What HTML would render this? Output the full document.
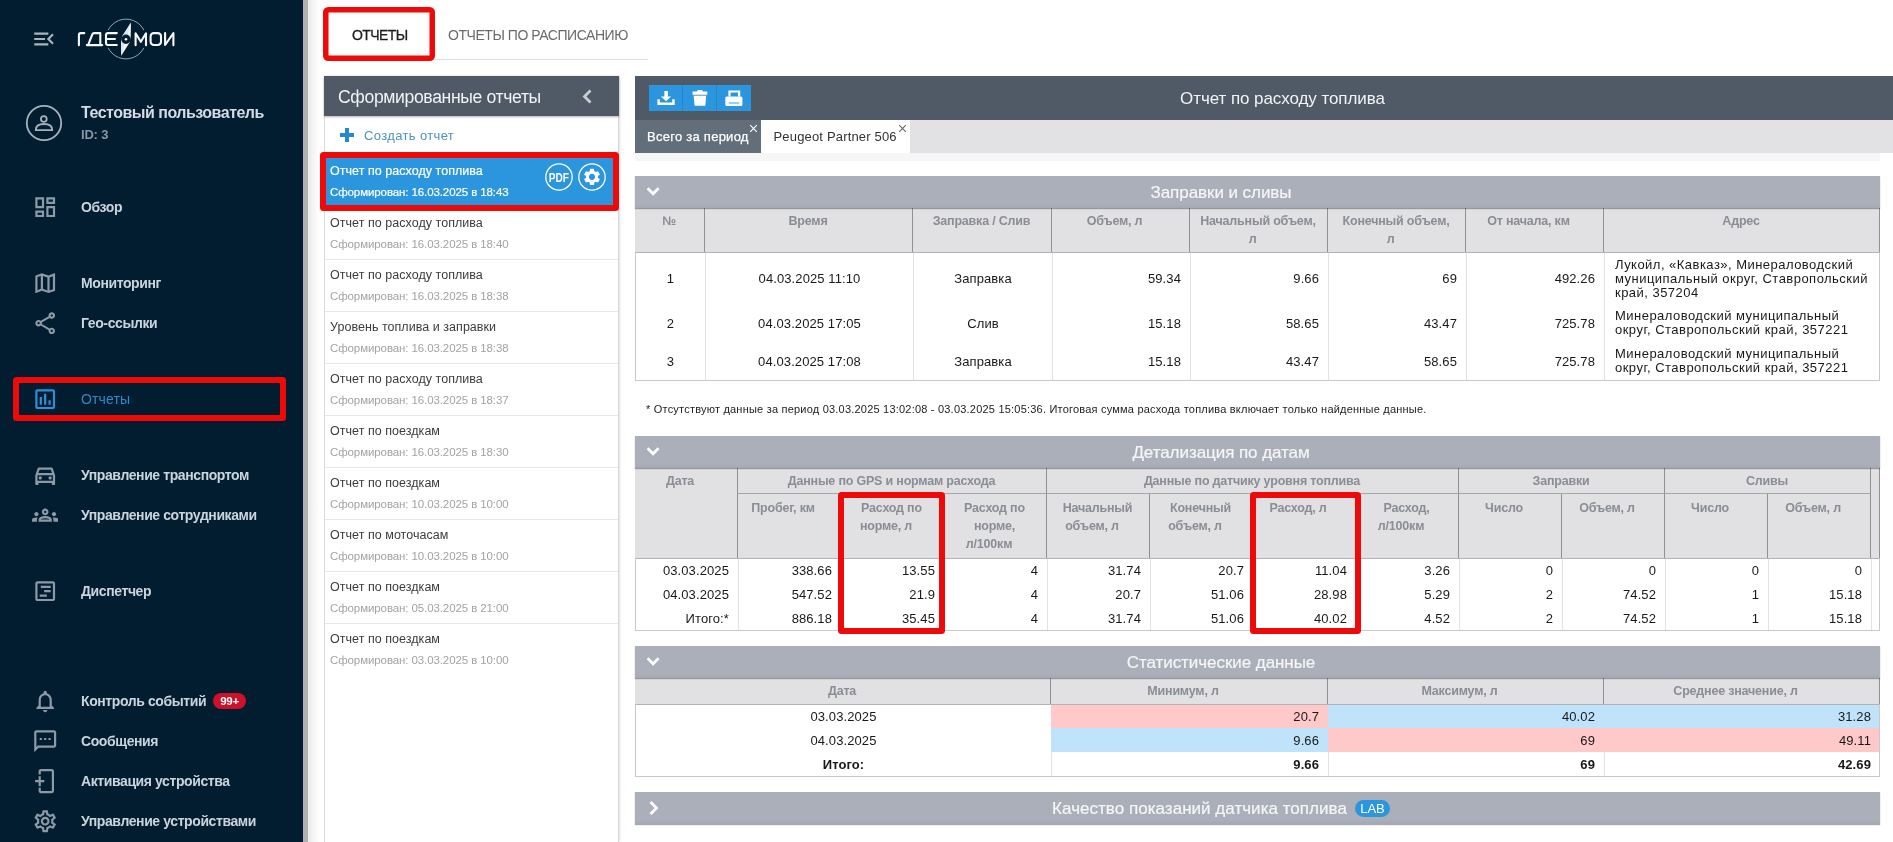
<!DOCTYPE html>
<html lang="ru">
<head>
<meta charset="utf-8">
<title>Отчеты</title>
<style>
*{box-sizing:border-box;margin:0;padding:0}
html,body{width:1893px;height:842px;overflow:hidden;background:#fff}
body{font-family:"Liberation Sans",sans-serif;font-size:13px;color:#222;position:relative}
.abs{position:absolute}
/* ---------- sidebar ---------- */
#side{position:absolute;left:0;top:0;width:303px;height:842px;background:#021d30}
#sideshadow{position:absolute;left:303px;top:0;width:19px;height:842px;background:linear-gradient(to right,#a7b1bc 0,#a7b1bc 1px,#b0b0b0 1px,#b0b0b0 5px,#ebebeb 5.500px,#f4f4f4 10px,#ffffff 17px)}
.mi{position:absolute;left:0;width:303px;height:40px}
.mi svg{position:absolute;left:31.800px;top:6.800px;width:26.400px;height:26.400px;fill:#8c9aa7}
.mi span{position:absolute;left:81px;top:0;line-height:40px;font-size:14px;font-weight:bold;color:#cbd4dc;letter-spacing:-0.4px;white-space:nowrap}
.mi.act span{color:#3388cc;font-weight:normal;letter-spacing:0.15px}
.mi.act svg{fill:#2f8fd8}
.red{position:absolute;border:6px solid #ef0a0a;border-radius:3.500px;z-index:3}
/* ---------- top tabs ---------- */
.ttab{position:absolute;top:27px;font-size:14px;line-height:16px;white-space:nowrap}
/* ---------- left panel ---------- */
#lp{position:absolute;left:324px;top:76px;width:295px;height:766px;background:#fff;border-left:1px solid #dcdcdc;border-right:1px solid #d6d6d6;box-shadow:1px 0 2px rgba(0,0,0,.12)}
#lph{position:absolute;left:324px;top:76px;width:295px;height:40px;background:#505a66;box-shadow:0 1px 2px rgba(0,0,0,.3)}
#lph span{position:absolute;left:14px;top:1px;line-height:40px;font-size:17.600px;color:#f2f3f4;letter-spacing:-0.36px;white-space:nowrap}
.ri{position:absolute;left:325px;width:293px;height:52px;border-bottom:1px solid #e6e6e6}
.ri .t{position:absolute;left:5px;top:7px;font-size:12.5px;line-height:16px;color:#3c3c3c;white-space:nowrap;letter-spacing:0.04px}
.ri .d{position:absolute;left:5px;top:28px;font-size:11.5px;line-height:16px;color:#a3a3a3;white-space:nowrap;letter-spacing:-0.1px}
.ri.sel{background:#2b95de;border-bottom:none}
.ri.sel .t,.ri.sel .d{color:#fff;-webkit-text-stroke:0.2px #fff}
/* ---------- main ---------- */
#mh{position:absolute;left:635px;top:76px;width:1258px;height:44px;background:#505a66}
#mh .title{position:absolute;left:0;top:1px;width:1295px;text-align:center;line-height:44px;font-size:17px;color:#f2f3f4;letter-spacing:-0.07px}
.btn{position:absolute;top:9px;width:34px;height:26px;background:#2b95de}
#tb{position:absolute;left:635px;top:120px;width:1258px;height:33px;background:#e2e2e4}
#tbs{position:absolute;left:635px;top:153px;width:1245px;height:8px;background:#f6f6f6}
.sh{position:absolute;left:635px;width:1245px;height:32px;background:linear-gradient(to bottom,#abafb9 0,#abafb9 28px,#a4a8b2 32px);box-shadow:0 1px 1px rgba(60,60,70,.45);z-index:2}
.sh .tt{position:absolute;left:0;top:1px;width:1172px;text-align:center;line-height:32px;font-size:17px;color:#f6f6f8;-webkit-text-stroke:0.2px #f6f6f8;white-space:nowrap;letter-spacing:-0.06px}
.sh svg{position:absolute;left:11px;top:10px}
table{border-collapse:separate;border-spacing:0;table-layout:fixed;position:absolute;left:635px}
th{background:#e1e1e3;color:#8a8d94;font-weight:bold;font-size:12.5px;line-height:18px;vertical-align:top;text-align:center;padding:4px 1px 0 0;border-right:1px solid #8f9196;letter-spacing:-0.2px}
i.sp{display:inline-block;width:11px;height:1px}
tr.sub th{padding-top:5px}
td{font-size:13px;color:#191919;border-left:1px solid #e2e2e2;padding:0 9px 0 0;text-align:right;white-space:nowrap;letter-spacing:0.1px}
td.c{text-align:center;padding:0}
td.ad{text-align:left;white-space:normal;line-height:14px;padding:2px 0 0 10px;letter-spacing:0.47px}
#t1 td{padding-top:2px}
td.pk{background:#ffc9c9;border-left-color:#ffc9c9}td.bl{background:#bfe3fb;border-left-color:#bfe3fb}
tr.b td{font-weight:bold}
tr.lr td{padding-bottom:1px}
th.g{border-bottom:1px solid #a4a6ab}
.tbox{position:absolute;left:635px;width:1245px;border:1px solid #c9c9c9;border-top:1px solid #b3b3b6;pointer-events:none}
</style>
</head>
<body><div id="wrap" style="position:absolute;left:0;top:0;width:1893px;height:842px;overflow:hidden;will-change:transform">
<div id="side"></div>
<div id="sideshadow"></div>
<!-- SIDEBAR CONTENT -->
<svg class="abs" style="left:31px;top:26px;width:26px;height:26px;fill:#a9b4be" viewBox="0 0 24 24"><path d="M3 18h13v-2H3v2zm0-5h10v-2H3v2zm0-7v2h13V6H3zm18 9.590L17.420 12 21 8.410 19.590 7l-5 5 5 5L21 15.590z"/></svg>
<!-- logo -->
<svg class="abs" style="left:74px;top:17px;width:104px;height:44px" viewBox="0 0 104 44">
 <circle cx="52" cy="22" r="19.900" fill="none" stroke="#8fa4b8" stroke-width="1"/>
 <rect x="28" y="13.200" width="48" height="17.600" fill="#021d30"/>
 <path d="M57 5.600 L56.700 20 L55.700 25.200 L47.300 38.800 L47 25.500 L48.400 19 Z" fill="#f4f7fa"/>
 <path d="M57 5.600 L52.500 21.500 L47.300 38.800 L47 25.500 L48.400 19 Z" fill="#dfe6ee"/>
 <circle cx="52" cy="22.200" r="4.700" fill="#021d30"/>
 <circle cx="52" cy="22.200" r="1.300" fill="#f4f7fa"/>
 <g fill="none" stroke="#f7f8fb" stroke-width="2.100" stroke-linecap="round" stroke-linejoin="round">
  <path d="M4.900 28.200 V18.100 Q4.900 16.100 6.900 16.100 H10.300"/>
  <path d="M12.800 28.100 H28.200 M14.200 27.800 L18.300 17.300 Q18.800 16.100 20 16.100 H26.300 V28"/>
  <path d="M42.800 16.100 H34 Q32 16.100 32 18.100 V26 Q32 28 34 28 H42.800 M32 22 H41"/>
  <path d="M61.600 28.200 V16.300 L66.800 24.800 L72 16.300 V28.200"/>
  <rect x="76.600" y="16.100" width="10.400" height="11.900" rx="3.200"/>
  <path d="M91.100 16.100 V28 L99.400 16.200 V28.200"/>
 </g>
</svg>
<!-- user -->
<svg class="abs" style="left:24px;top:103px;width:40px;height:40px" viewBox="0 0 40 40" fill="none" stroke="#a5b1bc" stroke-width="1.800">
 <circle cx="20" cy="20" r="17.200"/>
 <circle cx="19.800" cy="16" r="2.900"/>
 <path d="M11.700 27.200 Q11.700 21 20 21 Q28.300 21 28.300 27.200 Z" stroke-linejoin="round"/>
</svg>
<div class="abs" style="left:81px;top:103px;font-size:16px;line-height:20px;font-weight:bold;color:#d4dce3;letter-spacing:-0.5px;white-space:nowrap">Тестовый пользователь</div>
<div class="abs" style="left:81px;top:126px;font-size:13px;line-height:18px;font-weight:bold;color:#8897a4;letter-spacing:-0.2px;white-space:nowrap">ID: 3</div>

<div class="mi" style="top:187px"><svg viewBox="0 0 24 24"><path d="M19 5v2h-4V5h4M9 5v6H5V5h4m10 8v6h-4v-6h4M9 17v2H5v-2h4M21 3h-8v6h8V3zM11 3H3v10h8V3zm10 8h-8v10h8V11zm-10 4H3v6h8v-6z"/></svg><span>Обзор</span></div>
<div class="mi" style="top:263px"><svg viewBox="0 0 24 24"><path d="M20.500 3l-.160.030L15 5.100 9 3 3.360 4.900c-.210.070-.360.250-.360.480V20.500c0 .280.220.500.500.500l.160-.030L9 18.900l6 2.100 5.640-1.900c.210-.070.360-.250.360-.480V3.500c0-.280-.220-.500-.500-.500zM10 5.470l4 1.400v11.660l-4-1.400V5.470zm-5 .990l3-1.010v11.700l-3 1.160V6.460zm14 11.080l-3 1.010V6.860l3-1.160v11.840z"/></svg><span>Мониторинг</span></div>
<div class="mi" style="top:303px"><svg viewBox="0 0 24 24"><path d="M18 16.080c-.760 0-1.440.300-1.960.770L8.910 12.700c.050-.230.090-.460.090-.700s-.040-.470-.090-.700l7.050-4.110c.540.500 1.250.810 2.040.810 1.660 0 3-1.340 3-3s-1.340-3-3-3-3 1.340-3 3c0 .240.040.470.090.700L8.040 9.810C7.500 9.310 6.790 9 6 9c-1.660 0-3 1.340-3 3s1.340 3 3 3c.790 0 1.500-.310 2.040-.810l7.120 4.160c-.050.210-.080.430-.080.650 0 1.610 1.310 2.920 2.920 2.920s2.920-1.310 2.920-2.920c0-1.610-1.310-2.920-2.920-2.920zM18 4c.550 0 1 .450 1 1s-.450 1-1 1-1-.450-1-1 .450-1 1-1zM6 13c-.550 0-1-.450-1-1s.450-1 1-1 1 .450 1 1-.450 1-1 1zm12 7.020c-.550 0-1-.450-1-1s.450-1 1-1 1 .450 1 1-.450 1-1 1z"/></svg><span>Гео-ссылки</span></div>
<div class="mi act" style="top:379px"><svg viewBox="0 0 24 24"><path d="M19 3H5c-1.100 0-2 .900-2 2v14c0 1.100.900 2 2 2h14c1.100 0 2-.900 2-2V5c0-1.100-.900-2-2-2zm0 16H5V5h14v14zM7 10h2v7H7zm4-3h2v10h-2zm4 6h2v4h-2z"/></svg><span>Отчеты</span></div>
<div class="mi" style="top:455px"><svg viewBox="0 0 24 24"><path d="M18.920 6.010C18.720 5.420 18.160 5 17.500 5h-11c-.660 0-1.210.420-1.420 1.010L3 12v8c0 .550.450 1 1 1h1c.550 0 1-.450 1-1v-1h12v1c0 .550.450 1 1 1h1c.550 0 1-.450 1-1v-8l-2.080-5.990zM6.850 7h10.290l1.080 3.110H5.770L6.850 7zM19 17H5v-5h14v5z"/><circle cx="7.500" cy="14.500" r="1.500"/><circle cx="16.500" cy="14.500" r="1.500"/></svg><span>Управление транспортом</span></div>
<div class="mi" style="top:495px"><svg viewBox="0 0 24 24"><path d="M4 13c1.100 0 2-.900 2-2s-.900-2-2-2-2 .900-2 2 .900 2 2 2zm1.130 1.100c-.370-.060-.740-.100-1.130-.100-.990 0-1.930.210-2.780.580C.480 14.900 0 15.620 0 16.430V18h4.500v-1.610c0-.830.230-1.610.630-2.290zM20 13c1.100 0 2-.900 2-2s-.900-2-2-2-2 .900-2 2 .900 2 2 2zm4 3.430c0-.810-.480-1.530-1.220-1.850-.850-.370-1.790-.580-2.780-.580-.390 0-.760.040-1.130.100.400.680.630 1.460.630 2.290V18H24v-1.570zm-7.760-2.780c-1.170-.520-2.610-.900-4.240-.900-1.630 0-3.070.390-4.240.900C6.680 14.130 6 15.210 6 16.390V18h12v-1.610c0-1.180-.680-2.260-1.760-2.740zM8.070 16c.090-.230.130-.390.910-.690.970-.380 1.990-.560 3.020-.560s2.050.180 3.020.560c.770.300.810.460.910.690H8.070zM12 8c.550 0 1 .450 1 1s-.450 1-1 1-1-.450-1-1 .450-1 1-1m0-2c-1.660 0-3 1.340-3 3s1.340 3 3 3 3-1.340 3-3-1.340-3-3-3z"/></svg><span>Управление сотрудниками</span></div>
<div class="mi" style="top:571px"><svg viewBox="0 0 24 24"><path d="M19 5v14H5V5h14m0-2H5c-1.100 0-2 .900-2 2v14c0 1.100.900 2 2 2h14c1.100 0 2-.900 2-2V5c0-1.100-.900-2-2-2z"/><path d="M8 7h9v2H8zM11 11h6v2h-6zM7 15h6.500v2H7z"/></svg><span>Диспетчер</span></div>
<div class="mi" style="top:681px"><svg viewBox="0 0 24 24"><path d="M12 22c1.100 0 2-.900 2-2h-4c0 1.100.900 2 2 2zm6-6v-5c0-3.070-1.630-5.640-4.500-6.320V4c0-.830-.670-1.500-1.500-1.500s-1.500.670-1.500 1.500v.680C7.640 5.360 6 7.920 6 11v5l-2 2v1h16v-1l-2-2zm-2 1H8v-6c0-2.480 1.510-4.500 4-4.500s4 2.020 4 4.500v6z"/></svg><span>Контроль событий</span></div>
<div class="abs" style="left:213px;top:693px;width:33px;height:16px;border-radius:8px;background:#cf1029;color:#fff;font-size:11.500px;font-weight:bold;line-height:16px;text-align:center;letter-spacing:-0.3px">99+</div>
<div class="mi" style="top:721px"><svg viewBox="0 0 24 24"><path d="M20 2H4c-1.100 0-2 .900-2 2v18l4-4h14c1.100 0 2-.900 2-2V4c0-1.100-.900-2-2-2zm0 14H5.170L4 17.170V4h16v12zM7 9h2v2H7zm4 0h2v2h-2zm4 0h2v2h-2z"/></svg><span>Сообщения</span></div>
<div class="mi" style="top:761px"><svg viewBox="0 0 24 24"><path d="M8 1h10c1.100 0 2 .900 2 2v18c0 1.100-.900 2-2 2H8c-1.100 0-2-.900-2-2v-3h2v3h10V3H8v3H6V3c0-1.100.900-2 2-2z"/><path d="M2.800 11H6V7.500h2V11h3.200v2H8v3.500H6V13H2.800z"/></svg><span>Активация устройства</span></div>
<div class="mi" style="top:801px"><svg viewBox="0 0 24 24"><path d="M19.430 12.980c.040-.320.070-.640.070-.980 0-.340-.030-.660-.070-.980l2.110-1.650c.190-.150.240-.420.120-.640l-2-3.460c-.090-.160-.260-.250-.440-.250-.060 0-.120.010-.170.030l-2.490 1c-.520-.400-1.080-.730-1.690-.980l-.380-2.650C14.460 2.180 14.250 2 14 2h-4c-.250 0-.460.180-.490.420l-.380 2.650c-.610.250-1.170.590-1.690.980l-2.490-1c-.060-.020-.120-.030-.180-.030-.170 0-.340.090-.430.250l-2 3.460c-.130.220-.070.490.120.640l2.110 1.650c-.040.320-.070.650-.070.980 0 .330.030.660.070.980l-2.110 1.650c-.190.150-.240.420-.120.640l2 3.460c.090.160.260.250.440.250.060 0 .120-.010.170-.030l2.490-1c.520.400 1.080.730 1.690.980l.380 2.650c.030.240.240.420.490.420h4c.250 0 .460-.180.490-.420l.380-2.650c.610-.250 1.170-.590 1.690-.980l2.490 1c.060.020.120.030.180.030.170 0 .340-.090.430-.250l2-3.460c.120-.220.070-.490-.120-.640l-2.110-1.650zm-1.980-1.710c.040.310.050.520.050.730 0 .210-.020.430-.050.730l-.140 1.130.890.700 1.080.840-.700 1.210-1.270-.510-1.040-.420-.900.680c-.430.320-.840.560-1.250.730l-1.060.430-.160 1.130-.200 1.350h-1.400l-.190-1.350-.160-1.130-1.060-.430c-.430-.180-.830-.410-1.230-.710l-.910-.700-1.060.430-1.270.510-.700-1.210 1.080-.840.890-.700-.140-1.130c-.030-.310-.050-.540-.050-.740s.020-.430.050-.730l.140-1.130-.890-.700-1.080-.840.700-1.210 1.270.510 1.040.420.900-.680c.430-.320.840-.560 1.250-.730l1.060-.430.160-1.130.200-1.350h1.390l.190 1.350.160 1.130 1.060.430c.430.180.830.410 1.230.710l.910.700 1.060-.430 1.270-.510.700 1.210-1.070.850-.890.700.140 1.130zM12 8c-2.210 0-4 1.790-4 4s1.790 4 4 4 4-1.790 4-4-1.790-4-4-4zm0 6c-1.100 0-2-.900-2-2s.900-2 2-2 2 .900 2 2-.900 2-2 2z"/></svg><span>Управление устройствами</span></div>
<div class="red" style="left:13px;top:377px;width:273px;height:44px"></div>
<div id="lp"></div>
<div id="lph"><span>Сформированные отчеты</span></div>
<!-- TOP TABS -->
<div class="abs" style="left:324px;top:59px;width:324px;height:1px;background:#dddddd"></div>
<div class="ttab" style="left:352px;color:#1e1e1e;letter-spacing:-0.6px;font-weight:normal;-webkit-text-stroke:0.3px #1e1e1e">ОТЧЕТЫ</div>
<div class="ttab" style="left:448px;color:#6a6a6a;letter-spacing:-0.45px">ОТЧЕТЫ ПО РАСПИСАНИЮ</div>
<svg class="abs" style="left:323px;top:7px;width:112px;height:54px" viewBox="0 0 112 54"><rect x="2.750" y="2.750" width="106.500" height="48.500" rx="2.500" fill="none" stroke="#ef0a0a" stroke-width="5.500"/></svg>
<!-- LEFT PANEL -->
<svg class="abs" style="left:580px;top:88px;width:14px;height:17px" viewBox="0 0 14 17"><path d="M10.500 2.500 L4.500 8.500 L10.500 14.500" fill="none" stroke="#c9cdd2" stroke-width="2.800"/></svg>
<div class="abs" style="left:340px;top:133.300px;width:14px;height:3.300px;background:#2489cf"></div>
<div class="abs" style="left:345.400px;top:128px;width:3.400px;height:14px;background:#2489cf"></div>
<div class="abs" style="left:364px;top:127px;font-size:13px;line-height:18px;color:#4a92c4;letter-spacing:0.36px;white-space:nowrap">Создать отчет</div>
<div class="ri sel" style="top:156px"><div class="t">Отчет по расходу топлива</div><div class="d">Сформирован: 16.03.2025 в 18:43</div>
 <svg class="abs" style="left:219px;top:6px;width:30px;height:30px" viewBox="0 0 30 30"><circle cx="15" cy="15" r="13.200" fill="none" stroke="#fff" stroke-width="1.300"/><text x="4.700" y="19.600" font-family="Liberation Sans, sans-serif" font-size="12.500" font-weight="bold" fill="#fff" textLength="20.200" lengthAdjust="spacingAndGlyphs">PDF</text></svg>
 <svg class="abs" style="left:252px;top:6px;width:30px;height:30px" viewBox="0 0 30 30"><circle cx="15" cy="15" r="13.200" fill="none" stroke="#fff" stroke-width="1.300"/><g transform="translate(4.900 4.800) scale(0.842)"><path fill="#fff" d="M19.140 12.940c.040-.300.060-.610.060-.940 0-.320-.020-.640-.070-.940l2.030-1.580c.180-.140.230-.410.120-.610l-1.920-3.320c-.120-.220-.370-.290-.590-.220l-2.390.960c-.500-.380-1.030-.700-1.620-.940l-.360-2.540c-.040-.240-.240-.410-.480-.410h-3.840c-.240 0-.430.170-.470.410l-.360 2.540c-.590.240-1.130.570-1.620.940l-2.390-.960c-.220-.080-.470 0-.590.220L2.740 8.870c-.120.210-.080.470.120.610l2.030 1.580c-.050.300-.090.630-.090.940s.020.640.070.940l-2.030 1.580c-.180.140-.230.410-.120.610l1.920 3.320c.120.220.370.290.590.220l2.390-.960c.500.380 1.030.700 1.620.940l.360 2.540c.050.240.240.410.480.410h3.840c.240 0 .440-.170.470-.410l.360-2.540c.590-.240 1.130-.560 1.620-.940l2.390.960c.220.080.470 0 .590-.220l1.920-3.320c.120-.220.070-.470-.120-.610l-2.010-1.580zM12 15.600c-1.980 0-3.600-1.620-3.600-3.600s1.620-3.600 3.600-3.600 3.600 1.620 3.600 3.600-1.620 3.600-3.600 3.600z"/></g></svg>
</div>
<div class="ri" style="top:208px"><div class="t">Отчет по расходу топлива</div><div class="d">Сформирован: 16.03.2025 в 18:40</div></div>
<div class="ri" style="top:260px"><div class="t">Отчет по расходу топлива</div><div class="d">Сформирован: 16.03.2025 в 18:38</div></div>
<div class="ri" style="top:312px"><div class="t">Уровень топлива и заправки</div><div class="d">Сформирован: 16.03.2025 в 18:38</div></div>
<div class="ri" style="top:364px"><div class="t">Отчет по расходу топлива</div><div class="d">Сформирован: 16.03.2025 в 18:37</div></div>
<div class="ri" style="top:416px"><div class="t">Отчет по поездкам</div><div class="d">Сформирован: 16.03.2025 в 18:30</div></div>
<div class="ri" style="top:468px"><div class="t">Отчет по поездкам</div><div class="d">Сформирован: 10.03.2025 в 10:00</div></div>
<div class="ri" style="top:520px"><div class="t">Отчет по моточасам</div><div class="d">Сформирован: 10.03.2025 в 10:00</div></div>
<div class="ri" style="top:572px"><div class="t">Отчет по поездкам</div><div class="d">Сформирован: 05.03.2025 в 21:00</div></div>
<div class="ri" style="top:624px;border-bottom:none"><div class="t">Отчет по поездкам</div><div class="d">Сформирован: 03.03.2025 в 10:00</div></div>
<div class="red" style="left:320px;top:152px;width:299px;height:59px"></div>
<div id="mh"><div class="title">Отчет по расходу топлива</div></div>
<div id="tb"></div>
<div id="tbs"></div>
<!-- MAIN buttons -->
<div class="btn abs" style="left:649px;top:85px;width:102px"></div>
<div class="abs" style="left:682px;top:85px;width:1px;height:26px;background:#2686c8"></div>
<div class="abs" style="left:716px;top:85px;width:1px;height:26px;background:#2686c8"></div>
<svg class="abs" style="left:657px;top:89px;width:18px;height:18px" viewBox="0 0 18 18" fill="#fff"><path d="M7.400 2h3.500v5.400h3.200L9.100 12.300 3.900 7.400h3.500z"/><path d="M0.400 10.200h2.500v3.200h12.300v-3.200h2.500v5.700H0.400z"/></svg>
<svg class="abs" style="left:691px;top:89px;width:18px;height:18px" viewBox="0 0 18 18" fill="#fff"><path d="M6.400 1h5v1.600h4.900v3.200H1.500V2.600h4.900z"/><path d="M2.600 6.300h12.600l-0.900 10.500H3.600z"/><path d="M2.800 6.100h12.200v0.500H2.800z" fill="#3a7fb5"/></svg>
<svg class="abs" style="left:725px;top:89px;width:18px;height:18px" viewBox="0 0 18 18" fill="#fff"><path d="M3.400 1.400h11.800v6.200H13V3.600H5.600v4H3.400z"/><path d="M1.800 7.400h14.100a1.500 1.500 0 0 1 1.500 1.500v6.500a1.500 1.500 0 0 1-1.500 1.500H1.800a1.500 1.500 0 0 1-1.500-1.500V8.900a1.500 1.500 0 0 1 1.500-1.500z"/><path d="M3.800 13h10.400v2.200H3.800z" fill="#9ccdf0"/></svg>
<!-- inner tabs -->
<div class="abs" style="left:635px;top:120px;width:126px;height:33px;background:#636e7b"></div>
<div class="abs" style="left:647px;top:128px;font-size:13px;line-height:18px;color:#fff;letter-spacing:0.26px;white-space:nowrap;-webkit-text-stroke:0.25px #fff">Всего за период</div>
<div class="abs" style="left:761px;top:120px;width:149px;height:33px;background:#fff"></div>
<div class="abs" style="left:773.500px;top:128px;font-size:13px;line-height:18px;color:#333;letter-spacing:0.17px;white-space:nowrap">Peugeot Partner 506</div>
<svg class="abs" style="left:749px;top:124px;width:9px;height:9px" viewBox="0 0 9 9"><path d="M1.200 1.200 L7.800 7.800 M7.800 1.200 L1.200 7.800" stroke="#fff" stroke-width="1.100"/></svg>
<svg class="abs" style="left:898px;top:124px;width:9px;height:9px" viewBox="0 0 9 9"><path d="M1.200 1.200 L7.800 7.800 M7.800 1.200 L1.200 7.800" stroke="#666" stroke-width="1.100"/></svg>

<!-- SECTION 1 -->
<div class="sh" style="top:176px"><svg width="15" height="12" viewBox="0 0 15 12"><path d="M1.600 2.300 L7.100 7.800 L12.600 2.300" fill="none" stroke="#fff" stroke-width="2.700"/></svg><div class="tt">Заправки и сливы</div></div>
<table id="t1" style="top:208px;width:1245px">
<colgroup><col style="width:70px"><col style="width:208px"><col style="width:139px"><col style="width:138px"><col style="width:138px"><col style="width:138px"><col style="width:138px"><col style="width:276px"></colgroup>
<tr style="height:44px"><th>№</th><th>Время</th><th>Заправка / Слив</th><th>Объем, л<i class="sp"></i></th><th>Начальный объем,<br>л<i class="sp"></i></th><th>Конечный объем,<br>л<i class="sp"></i></th><th>От начала, км<i class="sp"></i></th><th class="last">Адрес</th></tr>
<tr style="height:51px"><td class="c">1</td><td class="c">04.03.2025 11:10</td><td class="c">Заправка</td><td>59.34</td><td>9.66</td><td>69</td><td>492.26</td><td class="ad">Лукойл, «Кавказ», Минераловодский<br>муниципальный округ, Ставропольский<br>край, 357204</td></tr>
<tr style="height:38px"><td class="c">2</td><td class="c">04.03.2025 17:05</td><td class="c">Слив</td><td>15.18</td><td>58.65</td><td>43.47</td><td>725.78</td><td class="ad">Минераловодский муниципальный<br>округ, Ставропольский край, 357221</td></tr>
<tr style="height:39px" class="lr"><td class="c">3</td><td class="c">04.03.2025 17:08</td><td class="c">Заправка</td><td>15.18</td><td>43.47</td><td>58.65</td><td>725.78</td><td class="ad">Минераловодский муниципальный<br>округ, Ставропольский край, 357221</td></tr>
</table>
<div class="tbox" style="top:252px;height:129px"></div>
<div class="abs" style="left:646px;top:401px;font-size:11px;line-height:16px;color:#222;letter-spacing:0.21px;white-space:nowrap">* Отсутствуют данные за период 03.03.2025 13:02:08 - 03.03.2025 15:05:36. Итоговая сумма расхода топлива включает только найденные данные.</div>

<!-- SECTION 2 -->
<div class="sh" style="top:436px"><svg width="15" height="12" viewBox="0 0 15 12"><path d="M1.600 2.300 L7.100 7.800 L12.600 2.300" fill="none" stroke="#fff" stroke-width="2.700"/></svg><div class="tt">Детализация по датам</div></div>
<table id="t2" style="top:468px;width:1245px">
<colgroup><col style="width:103px"><col style="width:103px"><col style="width:103px"><col style="width:103px"><col style="width:103px"><col style="width:103px"><col style="width:103px"><col style="width:103px"><col style="width:103px"><col style="width:103px"><col style="width:103px"><col style="width:103px"><col style="width:9px"></colgroup>
<tr style="height:26px"><th rowspan="2">Дата<i class="sp"></i></th><th colspan="3" class="g">Данные по GPS и нормам расхода</th><th colspan="4" class="g">Данные по датчику уровня топлива</th><th colspan="2" class="g">Заправки</th><th colspan="2" class="g">Сливы</th><th rowspan="2" class="last"></th></tr>
<tr style="height:64px" class="sub"><th>Пробег, км<i class="sp"></i></th><th>Расход по<br>норме, л<i class="sp"></i></th><th>Расход по<br>норме,<br>л/100км<i class="sp"></i></th><th>Начальный<br>объем, л<i class="sp"></i></th><th>Конечный<br>объем, л<i class="sp"></i></th><th>Расход, л<i class="sp"></i></th><th>Расход,<br>л/100км<i class="sp"></i></th><th>Число<i class="sp"></i></th><th>Объем, л<i class="sp"></i></th><th>Число<i class="sp"></i></th><th>Объем, л<i class="sp"></i></th></tr>
<tr style="height:24px"><td>03.03.2025</td><td>338.66</td><td>13.55</td><td>4</td><td>31.74</td><td>20.7</td><td>11.04</td><td>3.26</td><td>0</td><td>0</td><td>0</td><td>0</td><td></td></tr>
<tr style="height:24px"><td>04.03.2025</td><td>547.52</td><td>21.9</td><td>4</td><td>20.7</td><td>51.06</td><td>28.98</td><td>5.29</td><td>2</td><td>74.52</td><td>1</td><td>15.18</td><td></td></tr>
<tr style="height:25px" class="lr"><td>Итого:*</td><td>886.18</td><td>35.45</td><td>4</td><td>31.74</td><td>51.06</td><td>40.02</td><td>4.52</td><td>2</td><td>74.52</td><td>1</td><td>15.18</td><td></td></tr>
</table>
<div class="tbox" style="top:558px;height:73px"></div>

<!-- SECTION 3 -->
<div class="sh" style="top:646px"><svg width="15" height="12" viewBox="0 0 15 12"><path d="M1.600 2.300 L7.100 7.800 L12.600 2.300" fill="none" stroke="#fff" stroke-width="2.700"/></svg><div class="tt">Статистические данные</div></div>
<table id="t3" style="top:678px;width:1245px">
<colgroup><col style="width:416px"><col style="width:277px"><col style="width:276px"><col style="width:276px"></colgroup>
<tr style="height:26px"><th>Дата</th><th>Минимум, л<i class="sp"></i></th><th>Максимум, л<i class="sp"></i></th><th>Среднее значение, л<i class="sp"></i></th></tr>
<tr style="height:24px"><td class="c">03.03.2025</td><td class="pk">20.7</td><td class="bl">40.02</td><td class="bl">31.28</td></tr>
<tr style="height:24px"><td class="c">04.03.2025</td><td class="bl">9.66</td><td class="pk">69</td><td class="pk">49.11</td></tr>
<tr style="height:24px" class="b"><td class="c">Итого:</td><td>9.66</td><td>69</td><td>42.69</td></tr>
</table>
<div class="tbox" style="top:704px;height:73px"></div>

<!-- SECTION 4 -->
<div class="sh" style="top:792px"><svg width="12" height="16" viewBox="0 0 12 16" style="left:13px;top:8px"><path d="M2.500 2 L8.500 8 L2.500 14" fill="none" stroke="#fff" stroke-width="2.800"/></svg><div class="tt"><span style="position:relative;left:-21.500px;letter-spacing:0.03px">Качество показаний датчика топлива</span></div>
<div class="abs" style="left:720px;top:8px;width:35px;height:17px;border-radius:9px;background:#2b95de;color:#fff;font-size:13px;line-height:17px;text-align:center">LAB</div></div>

<!-- red highlight boxes -->
<div class="red" style="left:838px;top:492px;width:107px;height:142px"></div>
<div class="red" style="left:1250px;top:492px;width:111px;height:142px"></div>
</div></body>
</html>
